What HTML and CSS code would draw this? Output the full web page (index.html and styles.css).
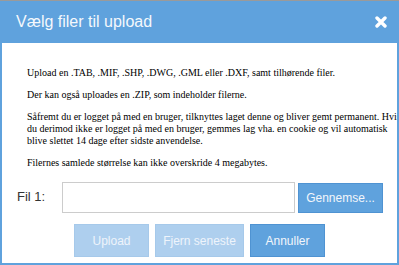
FILE: index.html
```html
<!DOCTYPE html>
<html lang="da">
<head>
    <meta charset="UTF-8">
    <title>Vælg filer til upload</title>
    <link rel="stylesheet" href="styles.css">
</head>
<body>
    <div class="dialog">
        <div class="dialog-header">
            <span class="dialog-title">Vælg filer til upload</span>
            <span class="dialog-close" title="Luk">
                <svg width="12" height="12" viewBox="0 0 12 12">
                    <path d="M2 2 L10 10 M10 2 L2 10" stroke="#fff" stroke-width="3.4" stroke-linecap="round" fill="none"/>
                </svg>
            </span>
        </div>

        <div class="dialog-body">
            <div class="intro">
                <p>Upload en .TAB, .MIF, .SHP, .DWG, .GML eller .DXF, samt tilhørende filer.</p>
                <p>Der kan også uploades en .ZIP, som indeholder filerne.</p>
                <p>Såfremt du er logget på med en bruger, tilknyttes laget denne og bliver gemt permanent. Hvis<br>du derimod ikke er logget på med en bruger, gemmes lag vha. en cookie og vil automatisk<br>blive slettet 14 dage efter sidste anvendelse.</p>
                <p>Filernes samlede størrelse kan ikke overskride 4 megabytes.</p>
            </div>

            <div class="file-row">
                <label class="file-label">Fil 1:</label>
                <div class="file-input"></div>
                <button class="btn btn-browse">Gennemse...</button>
            </div>

            <div class="actions">
                <button class="btn btn-upload" disabled>Upload</button>
                <button class="btn btn-remove" disabled>Fjern seneste</button>
                <button class="btn btn-cancel">Annuller</button>
            </div>
        </div>
    </div>
</body>
</html>
```

FILE: styles.css
```css
:root {
    --primary-color: #5fa2dd;
    --primary-border: #4f93d2;
    --disabled-color: #aecfee;
    --text-color: #000;
    --label-color: #333;
}

body {
    margin: 0;
    padding: 0;
    background-color: #9a9a9a;
    font-family: "Liberation Sans", Arial, sans-serif;
    overflow: hidden;
}

.dialog {
    margin-top: 1px;
    width: 399px;
    height: 264px;
    box-sizing: border-box;
    background-color: #fff;
    border: 2px solid var(--primary-color);
    border-top: none;
    overflow: hidden;
}

.dialog-header {
    height: 42px;
    margin: 0 -2px;
    background-color: var(--primary-color);
    display: flex;
    align-items: center;
    justify-content: space-between;
    padding: 0 12px 0 16px;
}

.dialog-title {
    color: #f4f8fc;
    font-size: 16px;
    margin-top: -1px;
}

.dialog-close {
    display: flex;
    width: 12px;
    height: 12px;
    margin-top: -1px;
}

.dialog-body {
    padding: 14px 0 0 15px;
}

.intro {
    padding-left: 10px;
    font-family: "Liberation Serif", "Times New Roman", serif;
    font-size: 10px;
    color: var(--text-color);
    white-space: nowrap;
}

.intro p {
    margin: 10px 0 0;
    line-height: 12px;
}

.file-row {
    display: flex;
    align-items: center;
    margin-top: 13px;
    height: 31px;
}

.file-label {
    width: 45px;
    font-size: 13px;
    color: var(--label-color);
    padding-bottom: 2px;
}

.file-input {
    width: 233px;
    height: 31px;
    box-sizing: border-box;
    border: 1px solid #ccc;
    background-color: #fff;
}

.btn {
    font-family: "Liberation Sans", Arial, sans-serif;
    font-size: 12px;
    color: #f2f6fb;
    background-color: var(--primary-color);
    border: 1px solid var(--primary-border);
    border-radius: 0;
    padding: 0;
    box-sizing: border-box;
}

.btn-browse {
    margin-left: 3px;
    width: 85px;
    height: 30px;
}

.actions {
    display: flex;
    justify-content: center;
    gap: 6px;
    margin: 11px 0 0 -15px;
}

.actions .btn {
    height: 33px;
}

.btn:disabled {
    background-color: var(--disabled-color);
    border-color: #a6c9ea;
    color: #eef4fb;
}

.btn-upload,
.btn-cancel {
    width: 75px;
}

.btn-remove {
    width: 89px;
}
```
